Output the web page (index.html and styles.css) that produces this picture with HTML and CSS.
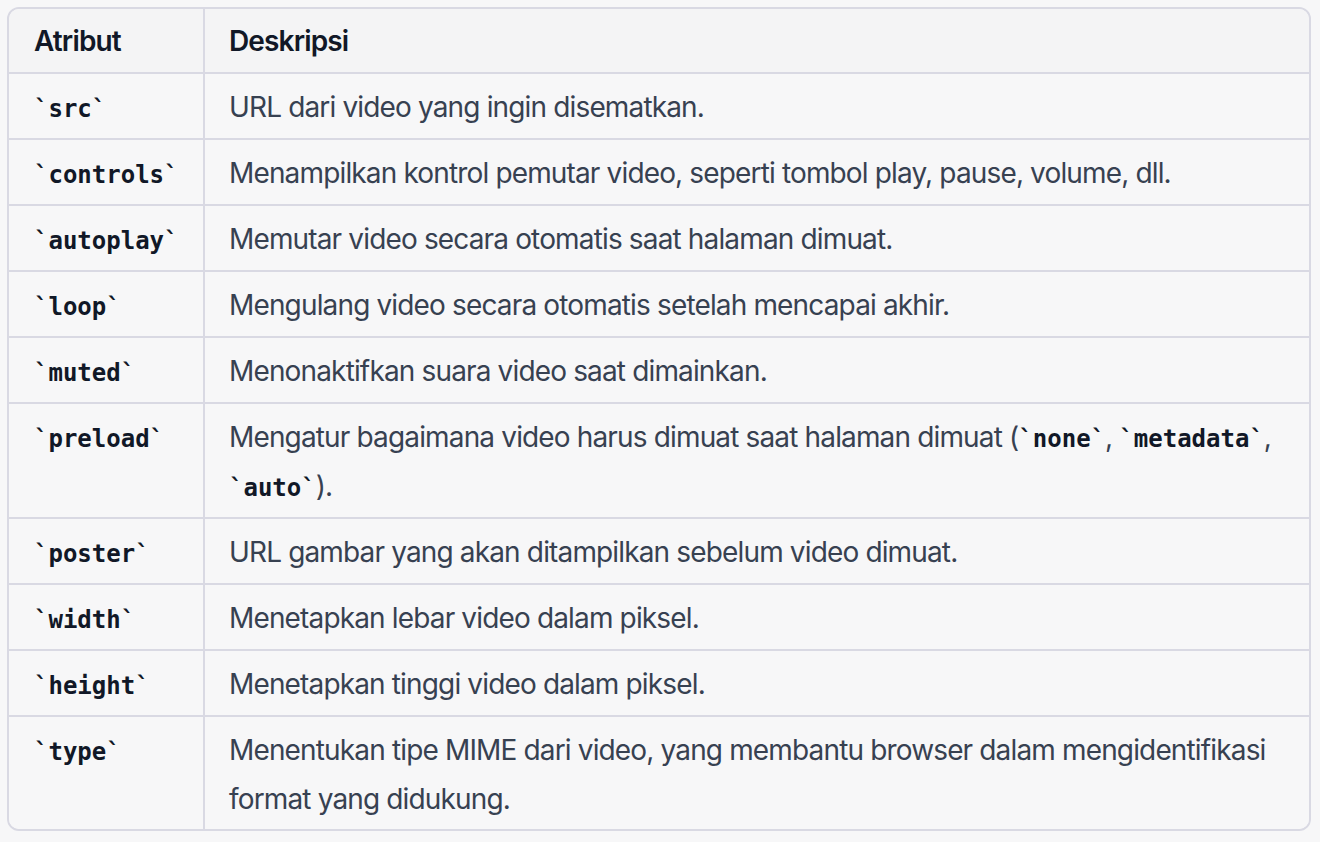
FILE: index.html
```html
<!DOCTYPE html>
<html>

<head>
    <title>Atribut video</title>
    <link rel="stylesheet" href="styles.css">
</head>

<body>

    <div class="wrap">
        <table class="attr-table">
            <thead>
                <tr>
                    <th class="col-name">Atribut</th>
                    <th>Deskripsi</th>
                </tr>
            </thead>
            <tbody>
                <tr>
                    <td class="col-name"><code>`src`</code></td>
                    <td>URL dari video yang ingin disematkan.</td>
                </tr>
                <tr>
                    <td class="col-name"><code>`controls`</code></td>
                    <td>Menampilkan kontrol pemutar video, seperti tombol play, pause, volume, dll.</td>
                </tr>
                <tr>
                    <td class="col-name"><code>`autoplay`</code></td>
                    <td>Memutar video secara otomatis saat halaman dimuat.</td>
                </tr>
                <tr>
                    <td class="col-name"><code>`loop`</code></td>
                    <td>Mengulang video secara otomatis setelah mencapai akhir.</td>
                </tr>
                <tr>
                    <td class="col-name"><code>`muted`</code></td>
                    <td>Menonaktifkan suara video saat dimainkan.</td>
                </tr>
                <tr>
                    <td class="col-name"><code>`preload`</code></td>
                    <td>Mengatur bagaimana video harus dimuat saat halaman dimuat (<code>`none`</code>, <code>`metadata`</code>, <code>`auto`</code>).</td>
                </tr>
                <tr>
                    <td class="col-name"><code>`poster`</code></td>
                    <td>URL gambar yang akan ditampilkan sebelum video dimuat.</td>
                </tr>
                <tr>
                    <td class="col-name"><code>`width`</code></td>
                    <td>Menetapkan lebar video dalam piksel.</td>
                </tr>
                <tr>
                    <td class="col-name"><code>`height`</code></td>
                    <td>Menetapkan tinggi video dalam piksel.</td>
                </tr>
                <tr>
                    <td class="col-name"><code>`type`</code></td>
                    <td>Menentukan tipe MIME dari video, yang membantu browser dalam mengidentifikasi format yang didukung.</td>
                </tr>
            </tbody>
        </table>
    </div>

</body>

</html>
```

FILE: styles.css
```css
body {
    margin: 0;
    background-color: #f7f7f8;
    font-family: Inter, "Noto Sans", sans-serif;
    color: #374151;
}

.wrap {
    padding: 7px 9px 0 7px;
}

.attr-table {
    width: 100%;
    border-collapse: separate;
    border-spacing: 0;
    border: 2px solid #d9d9e3;
    border-radius: 12px;
    overflow: hidden;
    font-size: 28px;
    line-height: 49px;
    letter-spacing: -0.85px;
}

th,
td {
    text-align: left;
    vertical-align: top;
    padding: 9px 24px 6px 24px;
    border-bottom: 2px solid #d9d9e3;
}

tbody tr:last-child td {
    border-bottom: none;
    padding-bottom: 5px;
}

th {
    background-color: #f4f4f5;
    color: #111827;
    font-weight: 600;
    padding-top: 8px;
    padding-bottom: 6px;
}

td {
    background-color: #f7f7f8;
}

.col-name {
    width: 145px;
    padding-left: 25px;
    border-right: 2px solid #d9d9e3;
}

code {
    font-family: "DejaVu Sans Mono", "Liberation Mono", monospace;
    font-weight: bold;
    font-size: 24px;
    line-height: 1;
    letter-spacing: 0;
    color: #111827;
}
```
